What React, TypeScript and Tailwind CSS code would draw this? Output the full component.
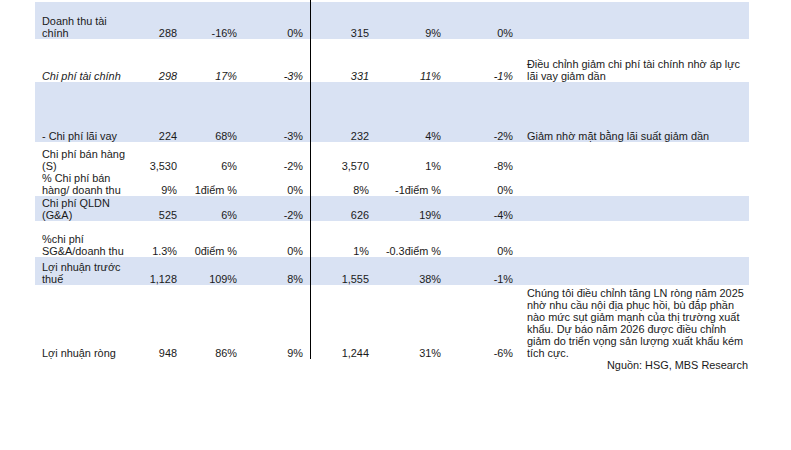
import React from "react";

type Row = {
  h: number;
  blue?: boolean;
  italic?: boolean;
  label: string[];
  v: string[];
  note?: string[];
};

const rows: Row[] = [
  { h: 37, blue: true, label: ["Doanh thu tài", "chính"], v: ["288", "-16%", "0%", "315", "9%", "0%"] },
  {
    h: 43,
    italic: true,
    label: ["Chi phí tài chính"],
    v: ["298", "17%", "-3%", "331", "11%", "-1%"],
    note: ["Điều chỉnh giảm chi phí tài chính nhờ áp lực", "lãi vay giảm dần"],
  },
  {
    h: 60,
    blue: true,
    label: ["- Chi phí lãi vay"],
    v: ["224", "68%", "-3%", "232", "4%", "-2%"],
    note: ["Giảm nhờ mặt bằng lãi suất giảm dần"],
  },
  { h: 30, label: ["Chi phí bán hàng", "(S)"], v: ["3,530", "6%", "-2%", "3,570", "1%", "-8%"] },
  { h: 24, label: ["% Chi phí bán", "hàng/ doanh thu"], v: ["9%", "1điểm %", "0%", "8%", "-1điểm %", "0%"] },
  { h: 25, blue: true, label: ["Chi phí QLDN", "(G&A)"], v: ["525", "6%", "-2%", "626", "19%", "-4%"] },
  { h: 36, label: ["%chi phí", "SG&A/doanh thu"], v: ["1.3%", "0điểm %", "0%", "1%", "-0.3điểm %", "0%"] },
  { h: 28, blue: true, label: ["Lợi nhuận trước", "thuế"], v: ["1,128", "109%", "8%", "1,555", "38%", "-1%"] },
  {
    h: 74,
    label: ["Lợi nhuận ròng"],
    v: ["948", "86%", "9%", "1,244", "31%", "-6%"],
    note: [
      "Chúng tôi điều chỉnh tăng LN ròng năm 2025",
      "nhờ nhu cầu nội địa phục hồi, bù đắp phần",
      "nào mức sụt giảm mạnh của thị trường xuất",
      "khẩu. Dự báo năm 2026 được điều chỉnh",
      "giảm do triển vọng sản lượng xuất khẩu kém",
      "tích cực.",
    ],
  },
];

function Lines({ lines }: { lines: string[] }) {
  return (
    <>
      {lines.map((l, i) => (
        <div key={i} className="whitespace-nowrap">
          {l}
        </div>
      ))}
    </>
  );
}

export default function App() {
  return (
    <div
      className="w-[791px] h-[450px] bg-white text-[#1a1a1a] overflow-hidden"
      style={{ fontFamily: '"Liberation Sans", Arial, sans-serif' }}
    >
      <div className="pl-[35px] text-[10.9px] leading-[12px]">
        <div className="flex h-[2px]">
          <div className="w-[275px]" />
          <div className="w-[1px] bg-black" />
        </div>
        {rows.map((r, i) => {
          const it = r.italic ? "italic" : "";
          return (
            <div
              key={i}
              className={`flex w-[714px] items-end ${r.blue ? "bg-[#d9e2f3]" : ""}`}
              style={{ height: r.h }}
            >
              <div className={`w-[100px] pl-[7px] ${it}`}>
                <Lines lines={r.label} />
              </div>
              <div className={`w-[45px] pr-[3px] text-right whitespace-nowrap ${it}`}>{r.v[0]}</div>
              <div className={`w-[60px] pr-[3px] text-right whitespace-nowrap ${it}`}>{r.v[1]}</div>
              <div className={`w-[70px] pr-[7px] text-right whitespace-nowrap ${it}`}>{r.v[2]}</div>
              <div className="w-[62px] h-full flex items-end justify-end border-l border-black pr-[3px]">
                <span className={`whitespace-nowrap ${it}`}>{r.v[3]}</span>
              </div>
              <div className={`w-[72px] pr-[3px] text-right whitespace-nowrap ${it}`}>{r.v[4]}</div>
              <div className={`w-[72px] pr-[3px] text-right whitespace-nowrap ${it}`}>{r.v[5]}</div>
              <div className="w-[233px] pl-[11px]">{r.note ? <Lines lines={r.note} /> : null}</div>
            </div>
          );
        })}
        <div className="w-[714px] text-right pr-[1px]">Nguồn: HSG, MBS Research</div>
      </div>
    </div>
  );
}
